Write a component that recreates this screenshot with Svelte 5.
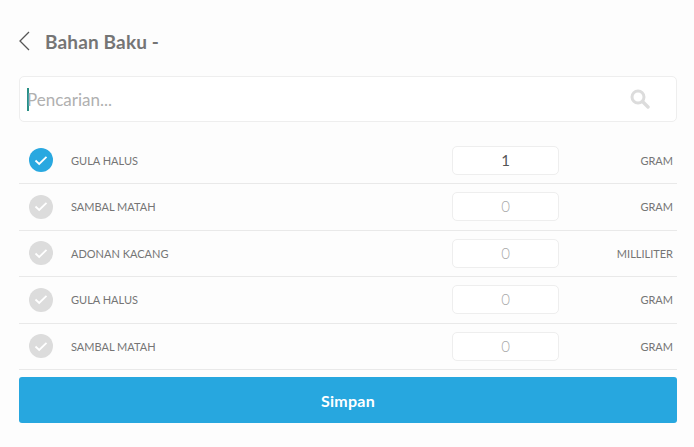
<script lang="ts">
  const items = [
    { name: "GULA HALUS", qty: 1, unit: "GRAM", on: true },
    { name: "SAMBAL MATAH", qty: 0, unit: "GRAM", on: false },
    { name: "ADONAN KACANG", qty: 0, unit: "MILLILITER", on: false },
    { name: "GULA HALUS", qty: 0, unit: "GRAM", on: false },
    { name: "SAMBAL MATAH", qty: 0, unit: "GRAM", on: false },
  ];
</script>

<div class="page">
  <header>
    <svg class="back" width="11" height="20" viewBox="0 0 11 20" fill="none">
      <path d="M10 1 L1 10 L10 19" stroke="#555" stroke-width="1.3" />
    </svg>
    <h1>Bahan Baku -</h1>
  </header>

  <div class="search">
    <span class="caret"></span>
    <span class="placeholder">Pencarian...</span>
    <svg class="glass" width="20" height="20" viewBox="0 0 20 20" fill="none">
      <circle cx="8" cy="8" r="6" stroke="#dcdcdc" stroke-width="3" />
      <path d="M12.5 12.5 L18 18" stroke="#dcdcdc" stroke-width="3.4" stroke-linecap="round" />
    </svg>
  </div>

  <div class="list">
    {#each items as item}
      <div class="row">
        <span class="check" class:on={item.on}>
          <svg width="14" height="11" viewBox="0 0 14 11" fill="none">
            <path d="M1.5 5.5 L5.2 9 L12.5 1.8" stroke="#fff" stroke-width="1.8" />
          </svg>
        </span>
        <span class="name">{item.name}</span>
        <div class="qty" class:on={item.on}>{item.qty}</div>
        <span class="unit">{item.unit}</span>
      </div>
    {/each}
  </div>

  <button class="save">Simpan</button>
</div>

<style>
  :global(body) {
    background: #fdfdfd;
  }

  .page {
    height: 447px;
    box-sizing: border-box;
    padding: 28px 17px 0 19px;
    font-family: "Lato", sans-serif;
    overflow: hidden;
  }

  header {
    display: flex;
    align-items: center;
    height: 26px;
  }

  .back {
    margin-right: 15px;
  }

  h1 {
    margin: 0;
    font-size: 19px;
    font-weight: 700;
    letter-spacing: 0.15px;
    color: #757575;
  }

  .search {
    display: flex;
    align-items: center;
    height: 46px;
    margin-top: 22px;
    box-sizing: border-box;
    padding: 0 26px 0 7px;
    background: #fff;
    border: 1px solid #eeeeee;
    border-radius: 5px;
  }

  .caret {
    width: 2px;
    height: 23px;
    margin-right: -2px;
    background: #2a8f85;
  }

  .placeholder {
    flex: 1;
    font-size: 17px;
    color: #b0b0b0;
  }

  .list {
    margin-top: 15.5px;
  }

  .row {
    display: flex;
    align-items: center;
    height: 46.5px;
    box-sizing: border-box;
    padding: 0 4px 0 10px;
    border-bottom: 1px solid #e9e9e9;
  }

  .check {
    display: flex;
    align-items: center;
    justify-content: center;
    width: 24px;
    height: 24px;
    margin-right: 18px;
    border-radius: 50%;
    background: #dcdcdc;
  }

  .check.on {
    background: #29a8e0;
  }

  .name {
    width: 381px;
    font-size: 11px;
    color: #757575;
  }

  .qty {
    width: 107px;
    height: 29px;
    box-sizing: border-box;
    border: 1px solid #eeeeee;
    border-radius: 5px;
    background: #fff;
    text-align: center;
    font-size: 15px;
    font-weight: 300;
    line-height: 27px;
    color: #a8a8a8;
  }

  .qty.on {
    font-weight: 400;
    color: #555;
  }

  .unit {
    flex: 1;
    text-align: right;
    font-size: 11px;
    color: #757575;
  }

  .save {
    display: block;
    width: 100%;
    height: 46px;
    margin-top: 7px;
    padding-bottom: 0;
    padding-top: 1px;
    border: none;
    border-radius: 3px;
    background: #27a7df;
    color: #fff;
    font-family: inherit;
    font-size: 16px;
    font-weight: 700;
    letter-spacing: 0.3px;
  }
</style>
